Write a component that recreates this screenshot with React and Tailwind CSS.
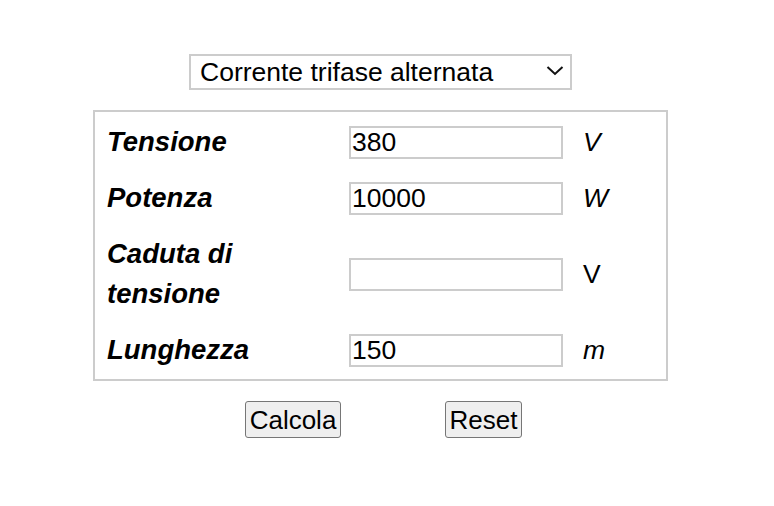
import { useState } from 'react';

const ROWS = [
  { key: 'v', label: 'Tensione', value: '380', unit: 'V', italicUnit: true },
  { key: 'p', label: 'Potenza', value: '10000', unit: 'W', italicUnit: true },
  { key: 'dv', label: 'Caduta di tensione', value: '', unit: 'V', italicUnit: false },
  { key: 'l', label: 'Lunghezza', value: '150', unit: 'm', italicUnit: true },
];

export default function App() {
  const [values, setValues] = useState(
    Object.fromEntries(ROWS.map((r) => [r.key, r.value]))
  );

  return (
    <div className="w-[774px] h-[506px] bg-white text-black font-['Liberation_Sans',Arial,sans-serif] text-[26.5px]">
      {/* Tipo di corrente */}
      <div className="pt-[53px] pl-[189px]">
        <div className="relative w-[383px] h-[36px]">
          <select
            defaultValue="tri"
            className="appearance-none w-full h-full border-2 border-[#cccccc] bg-white pl-[9px] text-[26.5px] leading-none outline-none"
          >
            <option value="tri">Corrente trifase alternata</option>
            <option value="mono">Corrente monofase alternata</option>
            <option value="cc">Corrente continua</option>
          </select>
          <svg
            className="pointer-events-none absolute left-[357px] top-[12px]"
            width="18"
            height="11"
            viewBox="0 0 18 11"
            fill="none"
            stroke="#111"
            strokeWidth="2"
          >
            <path d="M1.5 2 L9 9 L16.5 2" />
          </svg>
        </div>
      </div>

      {/* Tabella dati */}
      <div className="mt-[21px] ml-[93px] w-[575px] border-2 border-[#cccccc] pt-[2px] pb-[1px]">
        {ROWS.map((r) => (
          <div key={r.key} className="flex items-center py-[8px] leading-[40px]">
            <div className="w-[254px] pl-[12px]">
              <span className="block max-w-[180px] font-bold italic text-[27.5px]">{r.label}</span>
            </div>
            <input
              type="text"
              value={values[r.key]}
              onChange={(e) => setValues({ ...values, [r.key]: e.target.value })}
              className="w-[214px] h-[33px] border-2 border-[#cccccc] px-[1px] text-[26.5px] leading-none outline-none"
            />
            <span className={`ml-[20px] ${r.italicUnit ? 'italic' : ''}`}>{r.unit}</span>
          </div>
        ))}
      </div>

      {/* Pulsanti */}
      <div className="flex mt-[20px] ml-[245px] gap-[104px]">
        <button
          type="button"
          className="w-[96px] h-[37px] border border-[#767676] rounded-[3px] bg-[#efefef] text-[26px] leading-none"
        >
          Calcola
        </button>
        <button
          type="button"
          className="w-[77px] h-[37px] border border-[#767676] rounded-[3px] bg-[#efefef] text-[26px] leading-none"
        >
          Reset
        </button>
      </div>
    </div>
  );
}
